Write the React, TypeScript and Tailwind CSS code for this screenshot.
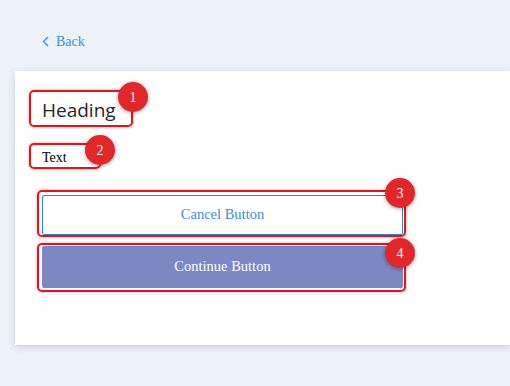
import type { ReactNode } from 'react';

function Badge({ n, className }: { n: number; className: string }) {
  return (
    <span
      className={`absolute flex h-[30px] w-[30px] items-center justify-center rounded-full bg-[#e3262a] text-[14px] text-white shadow-[0_1px_4px_rgba(0,0,0,0.35)] font-['Liberation_Serif',serif] ${className}`}
    >
      {n}
    </span>
  );
}

function Marked({ n, badge, className, children }: { n: number; badge: string; className: string; children: ReactNode }) {
  return (
    <div className={`relative rounded-[5px] border-2 border-[#e3141b] shadow-[0_0_3px_rgba(227,20,27,0.45)] ${className}`}>
      {children}
      <Badge n={n} className={badge} />
    </div>
  );
}

export default function App() {
  return (
    <div className="min-h-screen bg-[#edf1f9] pt-[32px]">
      {/* Back link */}
      <a href="#" className="ml-[42px] flex h-[18px] items-center gap-[7px] text-[14px] text-[#3a8de0] font-['Liberation_Serif',serif]">
        <svg width="7" height="11" viewBox="0 0 7 11" fill="none">
          <path d="M6 1L1.5 5.5L6 10" stroke="#3a8de0" strokeWidth="1.4" />
        </svg>
        Back
      </a>

      {/* Card */}
      <div className="ml-[15px] mt-[21px] h-[274px] bg-white pl-[14px] pt-[19px] shadow-[0_2px_7px_rgba(60,80,120,0.2)]">
        <Marked n={1} badge="right-[-17px] top-[-10px]" className="h-[37px] w-[104px] pl-[11px] pt-[6px]">
          <h1 className="text-[19px] leading-[24px] text-[#1f2430] font-['Open_Sans',sans-serif]">Heading</h1>
        </Marked>

        <Marked n={2} badge="right-[-16px] top-[-10px]" className="mt-[16px] h-[26px] w-[72px] pl-[11px] pt-[5px]">
          <p className="text-[14px] font-normal leading-[16px] text-black font-['Liberation_Serif',serif]">Text</p>
        </Marked>

        <div className="ml-[8px] mt-[21px] flex w-[369px] flex-col gap-[6px]">
          <Marked n={3} badge="right-[-11px] top-[-14px]" className="h-[47px] pl-[3px] pr-[1px] pt-[3px]">
            <button className="h-[40px] w-full rounded-[2px] border border-[#2b88d4] bg-white text-[14.5px] text-[#3a8de0] font-['Liberation_Serif',serif]">
              Cancel Button
            </button>
          </Marked>
          <Marked n={4} badge="right-[-11px] top-[-7px]" className="h-[49px] pl-[3px] pr-[1px] pt-[1px]">
            <button className="h-[42px] w-full rounded-[2px] bg-[#7c87c3] text-[14.5px] text-white font-['Liberation_Serif',serif]">
              Continue Button
            </button>
          </Marked>
        </div>
      </div>
    </div>
  );
}
